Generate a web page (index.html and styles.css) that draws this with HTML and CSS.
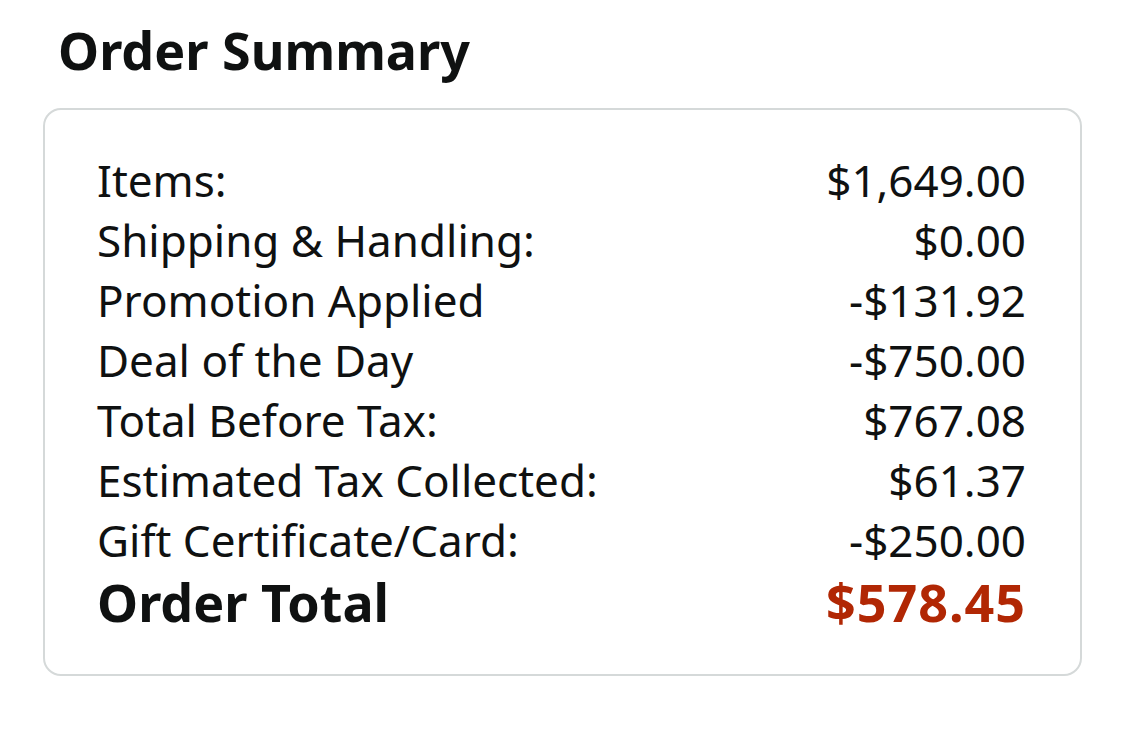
FILE: index.html
```html
<!DOCTYPE html>
<html>
<head>
<meta charset="utf-8">
<link rel="stylesheet" href="styles.css">
</head>
<body>
<main class="page">
  <h1 class="title">Order Summary</h1>
  <section class="card">
    <div class="row"><span>Items:</span><span>$1,649.00</span></div>
    <div class="row"><span>Shipping &amp; Handling:</span><span>$0.00</span></div>
    <div class="row"><span>Promotion Applied</span><span>-$131.92</span></div>
    <div class="row"><span>Deal of the Day</span><span>-$750.00</span></div>
    <div class="row"><span>Total Before Tax:</span><span>$767.08</span></div>
    <div class="row"><span>Estimated Tax Collected:</span><span>$61.37</span></div>
    <div class="row"><span>Gift Certificate/Card:</span><span>-$250.00</span></div>
    <div class="row total"><span>Order Total</span><span class="price">$578.45</span></div>
  </section>
</main>
</body>
</html>
```
FILE: styles.css
```css
html, body {
  margin: 0;
  padding: 0;
  background: #ffffff;
}
body {
  font-family: "Noto Sans", "Open Sans", sans-serif;
  color: #0f1111;
}
.page {
  padding: 14px 43px 0 43px;
  width: 1039px;
}
.title {
  margin: 0 0 22px 15px;
  font-size: 52px;
  font-weight: 700;
  line-height: 72px;
}
.card {
  border: 2px solid #d5d9d9;
  border-radius: 18px;
  padding: 40px 54px 40px 52px;
  display: flex;
  flex-direction: column;
}
.row {
  display: flex;
  justify-content: space-between;
  align-items: baseline;
  font-size: 44px;
  line-height: 60px;
}
.row.total {
  font-size: 52px;
  font-weight: 700;
  line-height: 64px;
}
.price {
  color: #b12704;
  letter-spacing: 1px;
}
```
